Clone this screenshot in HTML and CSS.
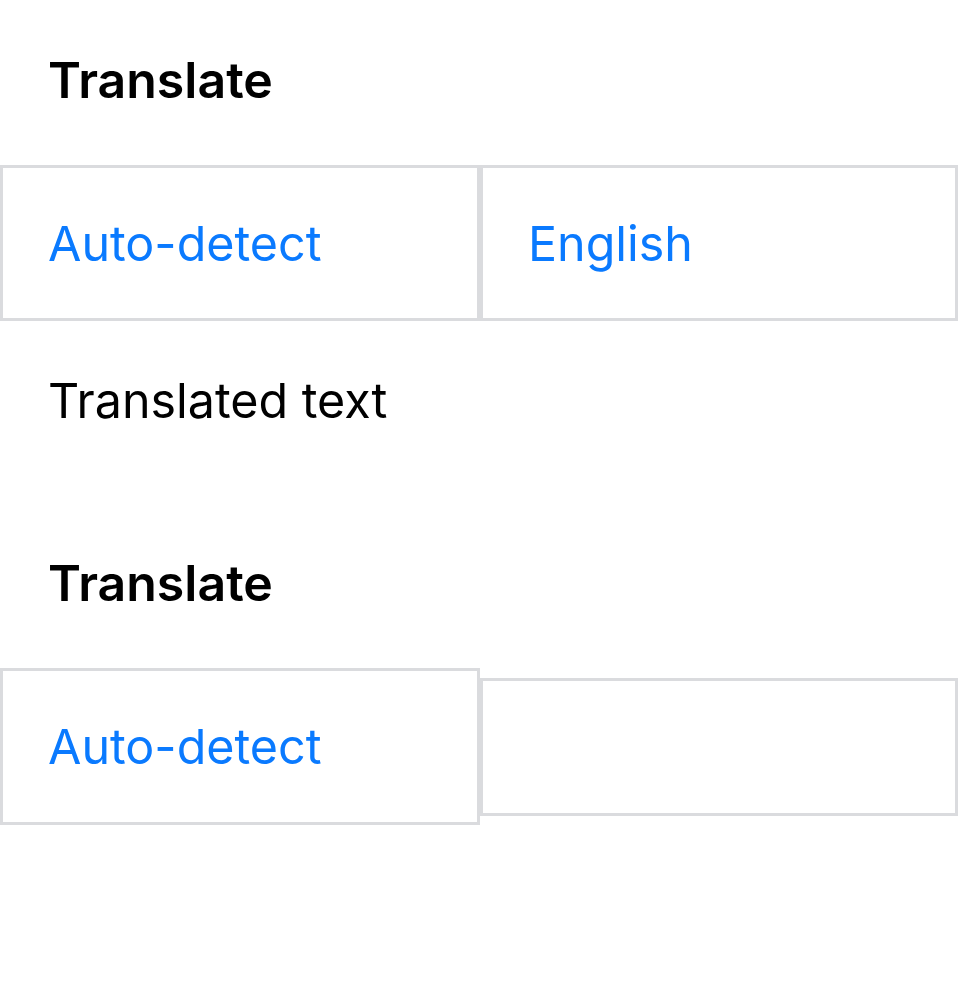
FILE: index.html
```html
<!DOCTYPE html>
<html lang="en">
<head>
<meta charset="utf-8">
<title>Translate</title>
<link rel="stylesheet" href="styles.css">
</head>
<body>
<section class="block">
  <h2 class="title">Translate</h2>
  <div class="row">
    <div class="select left">Auto-detect</div>
    <div class="select right">English</div>
  </div>
  <p class="result">Translated text</p>
</section>
<section class="block second">
  <h2 class="title">Translate</h2>
  <div class="row">
    <div class="select left">Auto-detect</div>
    <div class="select right empty"></div>
  </div>
</section>
</body>
</html>
```

FILE: styles.css
```css
html, body {
  margin: 0;
  padding: 0;
  background: #ffffff;
}
body {
  font-family: Inter, "Liberation Sans", sans-serif;
  font-size: 48.4px;
  line-height: 60px;
  color: #000000;
}
.block {
  display: flex;
  flex-direction: column;
}
.second {
  margin-top: 122px;
}
.title {
  margin: 50px 0 55px 48px;
  font-size: 50px;
  line-height: 60px;
  font-weight: 600;
}
.second .title {
  margin-top: 0;
}
.row {
  display: flex;
  align-items: center;
}
.select {
  box-sizing: border-box;
  border: 3px solid #dadbde;
  padding: 46px 0 44px 45px;
  color: #0a7aff;
  height: 156px;
}
.left {
  width: 480px;
}
.second .left {
  height: 157px;
}
.right {
  width: 478px;
  padding-left: 45px;
}
.empty {
  height: 138px;
}
.result {
  margin: 50px 0 0 48px;
}
```
